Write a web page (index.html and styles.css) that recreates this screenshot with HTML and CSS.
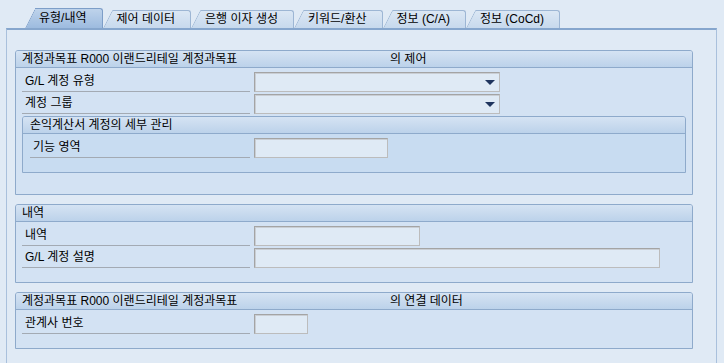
FILE: index.html
```html
<!DOCTYPE html>
<html lang="ko">
<head>
    <meta charset="UTF-8">
    <title>G/L 계정 - 유형/내역</title>
    <link rel="stylesheet" href="styles.css">
</head>
<body>

<!-- tab strip -->
<div class="tabs">
    <div class="tab active">유형/내역</div>
    <div class="tab">제어 데이터</div>
    <div class="tab">은행 이자 생성</div>
    <div class="tab">키워드/환산</div>
    <div class="tab">정보 (C/A)</div>
    <div class="tab">정보 (CoCd)</div>
</div>

<div class="panel">

    <!-- chart of accounts control -->
    <div class="group">
        <div class="group-title"><span class="title-main">계정과목표 R000 이랜드리테일 계정과목표</span><span>의 제어</span></div>
        <div class="group-body">
            <div class="row">
                <div class="label">G/L 계정 유형</div>
                <div class="field select w246"><span class="arrow"></span></div>
            </div>
            <div class="row">
                <div class="label">계정 그룹</div>
                <div class="field select w246"><span class="arrow"></span></div>
            </div>

            <div class="group inner">
                <div class="group-title">손익계산서 계정의 세부 관리</div>
                <div class="group-body">
                    <div class="row">
                        <div class="label">기능 영역</div>
                        <div class="field w134"></div>
                    </div>
                </div>
            </div>
        </div>
    </div>

    <!-- description -->
    <div class="group">
        <div class="group-title">내역</div>
        <div class="group-body short">
            <div class="row">
                <div class="label">내역</div>
                <div class="field w166"></div>
            </div>
            <div class="row">
                <div class="label">G/L 계정 설명</div>
                <div class="field w406"></div>
            </div>
        </div>
    </div>

    <!-- consolidation data -->
    <div class="group">
        <div class="group-title"><span class="title-main">계정과목표 R000 이랜드리테일 계정과목표</span><span>의 연결 데이터</span></div>
        <div class="group-body short">
            <div class="row">
                <div class="label">관계사 번호</div>
                <div class="field w54"></div>
            </div>
        </div>
    </div>

</div>

</body>
</html>
```

FILE: styles.css
```css
* { box-sizing: border-box; }
body { margin: 0; background-color: #e0eaf5; font-family: "Liberation Sans", "Noto Sans CJK KR", sans-serif; font-size: 12px; color: #000; }

.tabs { display: flex; align-items: flex-end; height: 28px; padding-left: 35px; position: relative; z-index: 0; }
.tab { position: relative; height: 18px; line-height: 17px; padding: 0 15px 0 4px; margin-right: 10px; background: linear-gradient(#dbe7f4, #c7d9ed); border-top: 1px solid #9db6d4; border-right: 1px solid #9db6d4; border-top-right-radius: 3px; }
.tab::before { content: ""; position: absolute; left: -10px; top: -1px; bottom: 0; width: 16px; background: linear-gradient(#dbe7f4, #c7d9ed); border-left: 1px solid #9db6d4; border-top: 1px solid #9db6d4; border-top-left-radius: 2px; transform: skewX(-27deg); transform-origin: bottom left; z-index: -1; }
.tab.active { height: 20px; line-height: 19px; background: linear-gradient(#bed3eb, #9dbbdf); border-color: #7d9ec8; }
.tab.active::before { background: linear-gradient(#bed3eb, #9dbbdf); border-color: #7d9ec8; }

.panel { margin: 0 7px 0 6px; min-height: 340px; padding: 20px 23px 0 8px; border-top: 2px solid #86a6cd; border-left: 1px solid #a9c0dc; border-right: 1px solid #a9c0dc; }

.group { margin-bottom: 9px; border: 1px solid #8eaacb; border-radius: 3px 3px 0 0; background-color: #d3e2f3; }
.group-title { height: 17px; line-height: 16px; padding-left: 6px; background: linear-gradient(#d5e3f3, #bcd2ea); border-bottom: 1px solid #8eaacb; border-radius: 2px 2px 0 0; white-space: nowrap; }
.title-main { display: inline-block; width: 368px; }
.group-body { padding: 4px 6px 21px 6px; }
.group-body.short { padding-bottom: 12px; }

.inner { margin: 0; background-color: #c8dcf1; }
.inner .group-title { padding-left: 7px; }
.inner .group-body { padding: 4px 6px 12px 7px; }
.inner .label { width: 220px; }

.row { display: flex; align-items: flex-end; height: 20px; margin-bottom: 2px; }
.label { width: 228px; height: 20px; line-height: 19px; padding-left: 3px; margin-right: 4px; border-bottom: 1px solid #a3aab3; }
.field { position: relative; height: 20px; background-color: #dfeaf5; border: 1px solid #a4a4a4; border-right-color: #bcbcbc; border-bottom-color: #bcbcbc; box-shadow: inset 1px 1px 0 #c9ced4; }
.arrow { position: absolute; right: 4px; top: 7px; width: 0; height: 0; border-left: 5px solid transparent; border-right: 5px solid transparent; border-top: 5px solid #1f355e; }

.w246 { width: 246px; }
.w134 { width: 134px; }
.w166 { width: 166px; }
.w406 { width: 406px; }
.w54 { width: 54px; }
```
